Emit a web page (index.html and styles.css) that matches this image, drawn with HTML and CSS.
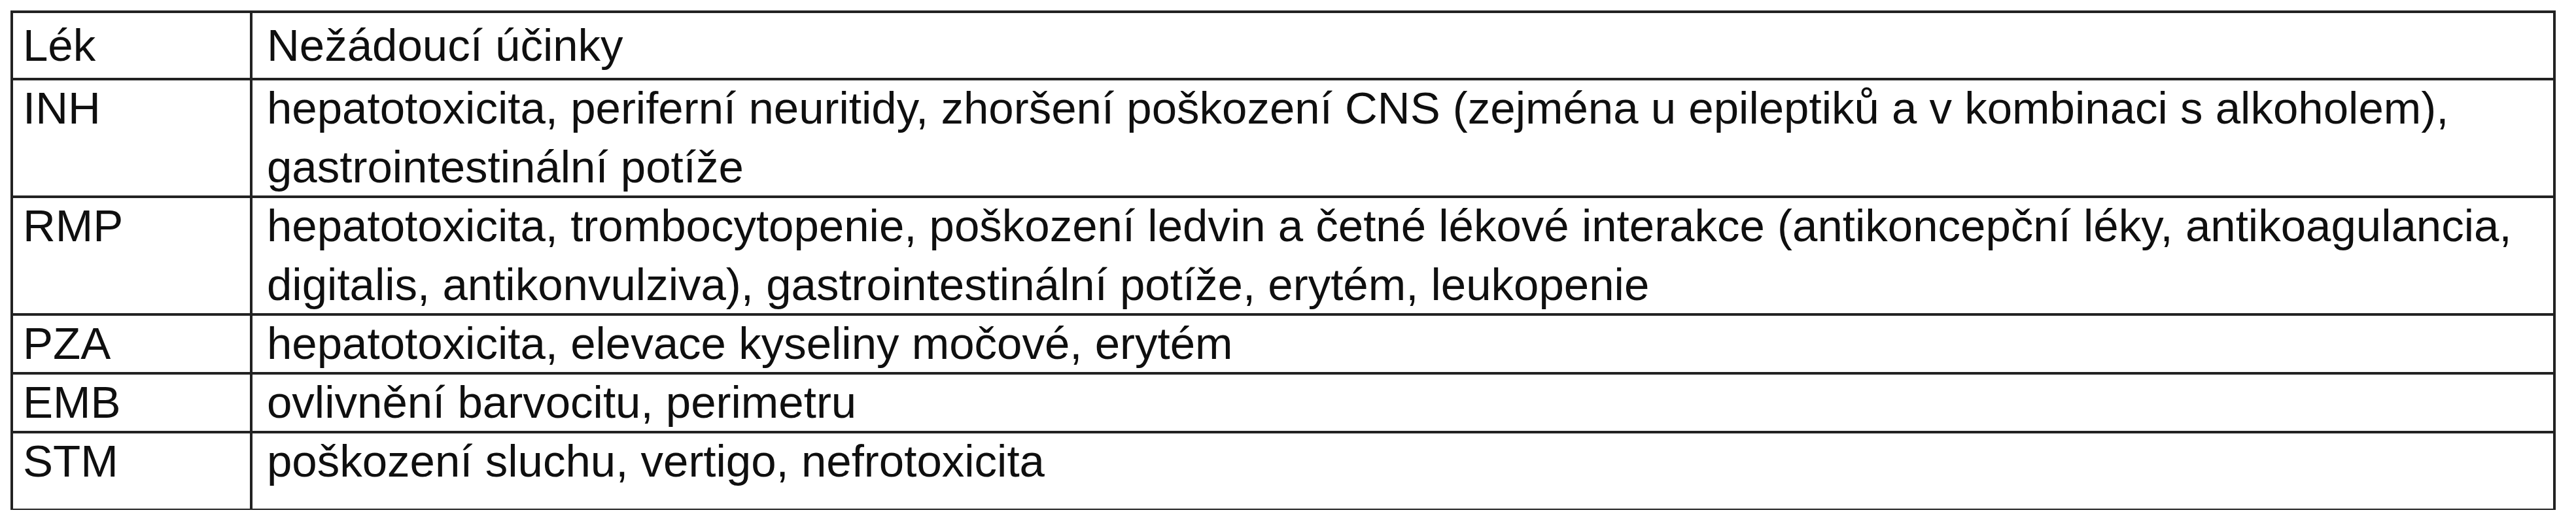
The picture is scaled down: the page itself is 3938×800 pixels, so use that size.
FILE: index.html
```html
<!DOCTYPE html>
<html lang="cs">
<head>
<meta charset="utf-8">
<title>Nežádoucí účinky antituberkulotik</title>
<link rel="stylesheet" href="styles.css">
</head>
<body>
<table class="drug-table">
  <colgroup>
    <col class="col-drug">
    <col class="col-effects">
  </colgroup>
  <thead>
    <tr class="row-head">
      <th class="cell cell-drug">Lék</th>
      <th class="cell cell-effects">Nežádoucí účinky</th>
    </tr>
  </thead>
  <tbody>
    <tr>
      <td class="cell cell-drug">INH</td>
      <td class="cell cell-effects">hepatotoxicita, periferní neuritidy, zhoršení poškození CNS (zejména u epileptiků a v kombinaci s alkoholem),<br>gastrointestinální potíže</td>
    </tr>
    <tr>
      <td class="cell cell-drug">RMP</td>
      <td class="cell cell-effects">hepatotoxicita, trombocytopenie, poškození ledvin a četné lékové interakce (antikoncepční léky, antikoagulancia,<br>digitalis, antikonvulziva), gastrointestinální potíže, erytém, leukopenie</td>
    </tr>
    <tr>
      <td class="cell cell-drug">PZA</td>
      <td class="cell cell-effects">hepatotoxicita, elevace kyseliny močové, erytém</td>
    </tr>
    <tr>
      <td class="cell cell-drug">EMB</td>
      <td class="cell cell-effects">ovlivnění barvocitu, perimetru</td>
    </tr>
    <tr class="row-last">
      <td class="cell cell-drug">STM</td>
      <td class="cell cell-effects">poškození sluchu, vertigo, nefrotoxicita</td>
    </tr>
  </tbody>
</table>
</body>
</html>
```

FILE: styles.css
```css
html, body {
  margin: 0;
  padding: 0;
  background: #ffffff;
}

body {
  font-family: "Liberation Sans", Arial, Helvetica, sans-serif;
  color: #0f0f0f;
}

.drug-table {
  margin: 18px 0 0 18px;
  width: 3887px;
  border-collapse: separate;
  border-spacing: 0;
  table-layout: fixed;
}

.col-drug {
  width: 366px;
}

.cell {
  font-size: 69px;
  line-height: 90px;
  font-weight: normal;
  text-align: left;
  vertical-align: top;
  padding: 0 16px 0 17px;
  outline: 4px solid #222222;
  outline-offset: -2px;
  white-space: nowrap;
}

.cell-effects {
  padding-left: 24px;
}

.row-head .cell {
  padding-top: 7px;
  padding-bottom: 6px;
}

.row-last .cell {
  padding-bottom: 29px;
}
```
